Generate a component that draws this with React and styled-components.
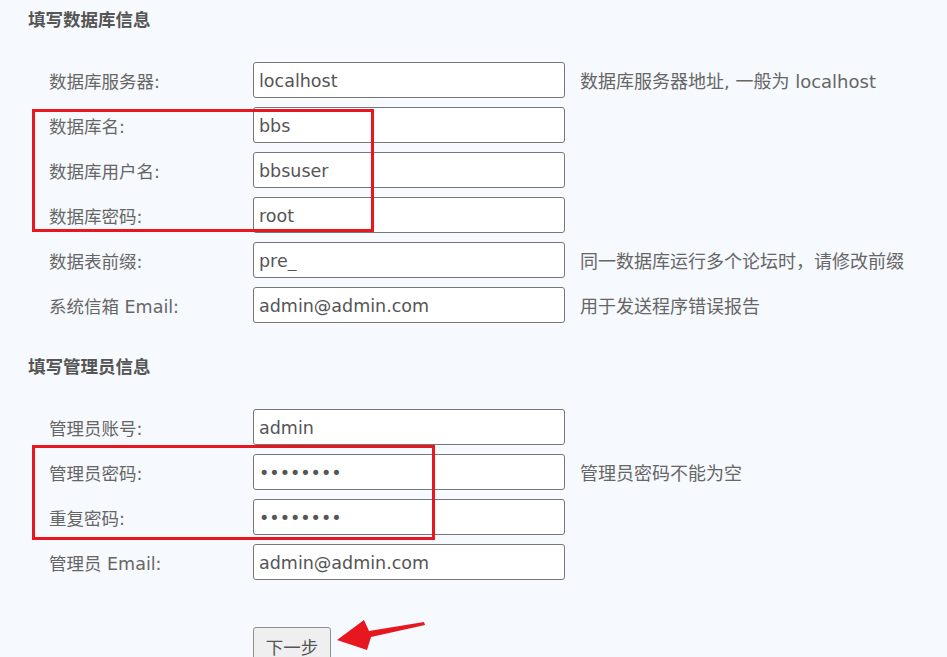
import { createGlobalStyle, styled } from "styled-components";

const GlobalStyle = createGlobalStyle`
  html, body {
    margin: 0;
    padding: 0;
    background: #f6f9fd;
  }
  body {
    font-family: "DejaVu Sans", "Noto Sans CJK SC", sans-serif;
    color: #666;
  }
`;

const Page = styled.div`
  position: relative;
  width: 947px;
  height: 657px;
  overflow: hidden;
  padding: 10px 0 0 28px;
  box-sizing: border-box;
`;

const Section = styled.section`
  margin-top: ${(p) => p.$top || 0}px;
`;

const SectionTitle = styled.h3`
  margin: 0 0 32px;
  font-size: 17.5px;
  line-height: 20px;
  font-weight: bold;
  color: #555;
`;

const Form = styled.div`
  display: grid;
  grid-template-columns: 204px 312px 1fr;
  grid-auto-rows: 36px;
  row-gap: 9px;
  padding-left: 21px;
  align-items: center;
`;

const Label = styled.label`
  font-size: 17.5px;
  color: #666;
  white-space: nowrap;
`;

const Input = styled.input`
  box-sizing: border-box;
  width: 312px;
  height: 36px;
  margin: 0;
  padding: 1px 5px 0;
  border: 1px solid #767676;
  border-radius: 3px;
  background: #fff;
  font-family: inherit;
  font-size: 17.5px;
  color: #555;
  outline: none;
`;

const Hint = styled.span`
  padding-left: 15px;
  font-size: 18px;
  color: #666;
  white-space: nowrap;
`;

const ButtonRow = styled.div`
  display: grid;
  grid-template-columns: 204px auto;
  padding-left: 21px;
  margin-top: 47px;
`;

const NextBtn = styled.button`
  grid-column: 2;
  justify-self: start;
  width: 78px;
  height: 36px;
  border: 1px solid #8f8f8f;
  border-radius: 3px;
  background: #efefef;
  font-family: inherit;
  font-size: 17.5px;
  color: #555;
  padding: 2px 0 0;
`;

const Mark = styled.div`
  position: absolute;
  border: 3px solid #e8161f;
  box-sizing: border-box;
  pointer-events: none;
`;

const Arrow = styled.svg`
  position: absolute;
  left: 0;
  top: 0;
  pointer-events: none;
`;

const dbRows = [
  { label: "数据库服务器:", value: "localhost", hint: "数据库服务器地址, 一般为 localhost" },
  { label: "数据库名:", value: "bbs" },
  { label: "数据库用户名:", value: "bbsuser" },
  { label: "数据库密码:", value: "root" },
  { label: "数据表前缀:", value: "pre_", hint: "同一数据库运行多个论坛时，请修改前缀" },
  { label: "系统信箱 Email:", value: "admin@admin.com", hint: "用于发送程序错误报告" },
];

const adminRows = [
  { label: "管理员账号:", value: "admin" },
  { label: "管理员密码:", value: "password", type: "password", hint: "管理员密码不能为空" },
  { label: "重复密码:", value: "password", type: "password" },
  { label: "管理员 Email:", value: "admin@admin.com" },
];

const Rows = ({ rows }) => (
  <Form>
    {rows.map((r) => [
      <Label key={r.label + "-l"}>{r.label}</Label>,
      <Input key={r.label + "-i"} type={r.type || "text"} defaultValue={r.value} />,
      r.hint ? <Hint key={r.label + "-h"}>{r.hint}</Hint> : <span key={r.label + "-h"} />,
    ])}
  </Form>
);

const App = () => {
  return (
    <>
      <GlobalStyle />
      <Page>
        <Section>
          <SectionTitle>填写数据库信息</SectionTitle>
          <Rows rows={dbRows} />
        </Section>
        <Section $top={34}>
          <SectionTitle>填写管理员信息</SectionTitle>
          <Rows rows={adminRows} />
        </Section>
        <ButtonRow>
          <NextBtn>下一步</NextBtn>
        </ButtonRow>

        <Mark style={{ left: 32, top: 109, width: 342, height: 123 }} />
        <Mark style={{ left: 32, top: 445, width: 403, height: 95 }} />
        <Arrow width="947" height="657" viewBox="0 0 947 657">
          <polygon
            points="337,640 364,620 369,631 424,622 425,625 371,637 367,650"
            fill="#e8161f"
          />
        </Arrow>
      </Page>
    </>
  );
};

export default App;
